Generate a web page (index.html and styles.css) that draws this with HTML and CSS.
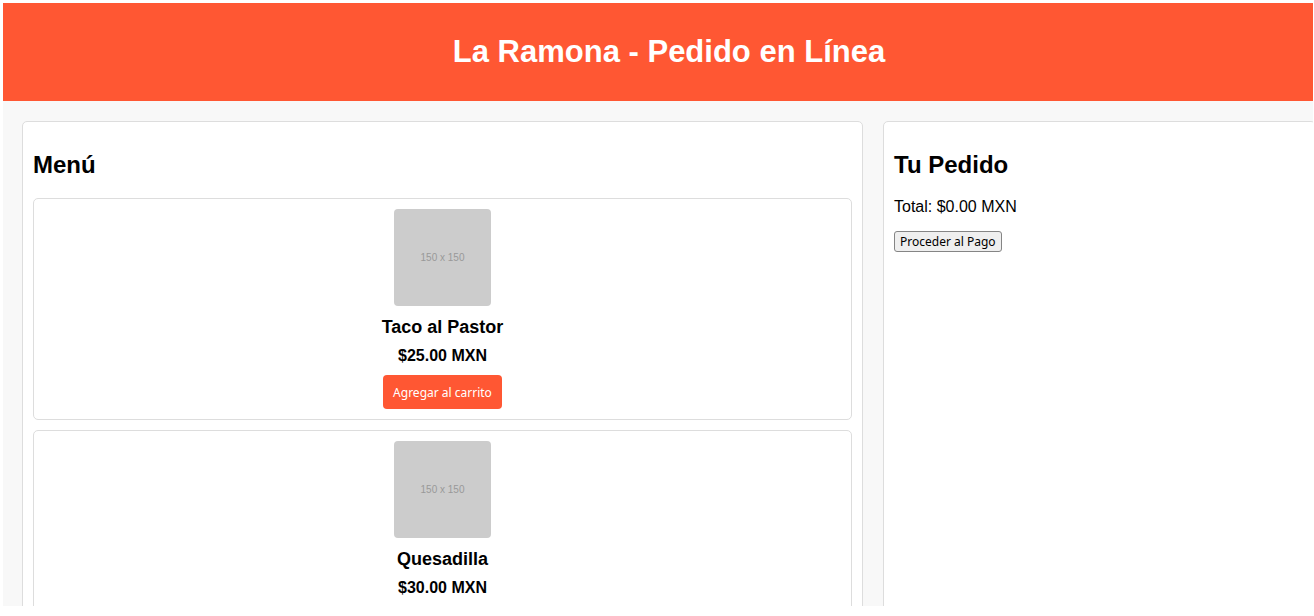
FILE: index.html
```html
<!DOCTYPE html>
<html lang="es">
<head>
<meta charset="utf-8">
<title>La Ramona - Pedido en Línea</title>
<link rel="stylesheet" href="styles.css">
</head>
<body>
<div class="frame">
  <div class="page">
    <header class="site-header">
      <h1 class="site-title">La Ramona - Pedido en Línea</h1>
    </header>
    <main class="layout">
      <section class="panel menu">
        <h2 class="panel-title">Menú</h2>
        <div class="item">
          <div class="thumb">150 x 150</div>
          <h3 class="item-name">Taco al Pastor</h3>
          <p class="item-price">$25.00 MXN</p>
          <button class="add-btn">Agregar al carrito</button>
        </div>
        <div class="item">
          <div class="thumb">150 x 150</div>
          <h3 class="item-name">Quesadilla</h3>
          <p class="item-price">$30.00 MXN</p>
        </div>
      </section>
      <aside class="panel order">
        <h2 class="panel-title">Tu Pedido</h2>
        <p class="total">Total: $0.00 MXN</p>
        <button class="pay-btn">Proceder al Pago</button>
      </aside>
    </main>
  </div>
</div>
</body>
</html>
```
FILE: styles.css
```css
html, body {
  margin: 0;
  background: #ffffff;
}
body {
  padding: 3px 0 0 3px;
  font-family: "Liberation Sans", Arial, sans-serif;
  color: #000;
}
.frame {
  width: 1310px;
  height: 603px;
  overflow: hidden;
  background: #f8f8f8;
}
.page {
  width: 1332px;
}
.site-header {
  background: #ff5733;
  height: 98px;
  box-sizing: border-box;
  padding: 31px 0 0;
  text-align: center;
}
.site-title {
  margin: 0;
  color: #ffffff;
  font-size: 31px;
  line-height: 36px;
  font-weight: bold;
}
.layout {
  display: grid;
  grid-template-columns: 841px 1fr;
  column-gap: 20px;
  padding: 20px 19px;
  align-items: start;
}
.panel {
  background: #ffffff;
  border: 1px solid #dddddd;
  border-radius: 5px;
  padding: 10px;
  min-height: 520px;
}
.panel-title {
  font-size: 24px;
  font-weight: bold;
  margin: 19px 0 19px;
  line-height: 28px;
}
.item {
  border: 1px solid #dddddd;
  border-radius: 5px;
  padding: 10px;
  margin-bottom: 10px;
  text-align: center;
}
.thumb {
  width: 97px;
  height: 97px;
  margin: 0 auto;
  background: #cccccc;
  border-radius: 4px;
  color: #999999;
  font-size: 10px;
  display: flex;
  align-items: center;
  justify-content: center;
}
.item-name {
  font-size: 18px;
  line-height: 21px;
  margin: 11px 0 0;
  font-weight: bold;
}
.item-price {
  font-size: 16px;
  line-height: 18px;
  font-weight: bold;
  margin: 9px 0 10px;
}
.add-btn {
  background: #ff5733;
  color: #ffffff;
  border: none;
  border-radius: 4px;
  height: 34px;
  padding: 0 10px;
  font-family: "Noto Sans", "Open Sans", sans-serif;
  font-size: 12px;
  cursor: pointer;
}
.total {
  font-size: 16px;
  line-height: 18px;
  margin: 17px 0 15px;
}
.pay-btn {
  background: #efefef;
  border: 1px solid #858585;
  border-radius: 3px;
  height: 21px;
  padding: 0 5px;
  font-family: "Noto Sans", "Open Sans", sans-serif;
  font-size: 12px;
  color: #000;
}
```
